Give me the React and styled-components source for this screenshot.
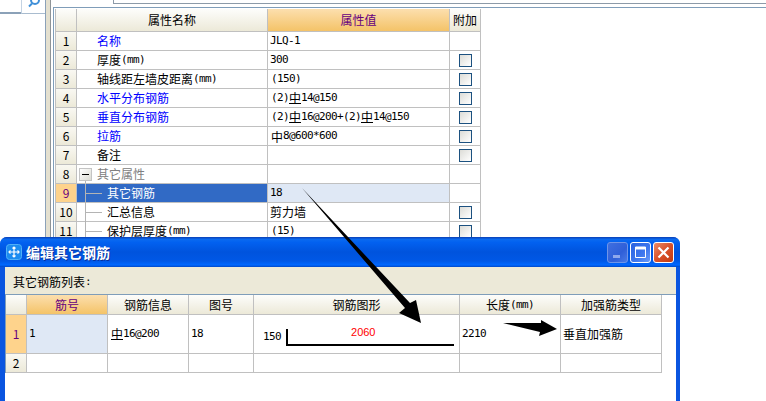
import React from 'react'
import styled, { createGlobalStyle } from 'styled-components'

const GlobalStyle = createGlobalStyle`
    html, body {
        margin: 0;
        padding: 0;
        background: #fff;
    }
`;

const Page = styled.div`
    position: relative;
    display: flex;
    width: 766px;
    height: 401px;
    overflow: hidden;
    background: #fff;
    color: #000;
    font-family: "Noto Sans CJK SC", "Liberation Sans", sans-serif;
    font-size: 12px;
    line-height: 14px;
`;

const SidePanel = styled.div`
    width: 45px;
    flex: none;
    border-right: 1px solid #8ba1b8;
`;

const SideTabs = styled.div`
    display: flex;
    height: 14px;
`;

const TabBlank = styled.div`
    width: 21px;
    height: 12px;
    border-bottom: 2px solid #8ba1b8;
`;

const SearchTab = styled.div`
    flex: 1;
    height: 14px;
    box-sizing: border-box;
    border-left: 1px solid #c4d3e3;
    border-bottom: 1px solid #a9bccf;
    overflow: hidden;
`;

const Splitter = styled.div`
    width: 4px;
    flex: none;
    background: #e4e0cf;
    border-right: 1px solid #8e9498;
    margin-right: 2px;
`;

const MainPanel = styled.div`
    flex: 1;
    min-width: 0;
`;

const TopTabs = styled.div`
    height: 3px;
    margin-left: 60px;
    border-left: 1px solid #8c9aa8;
    border-bottom: 1px solid #8c9aa8;
`;

const Frame = styled.div`
    margin-top: 3px;
    padding: 1px 0 0 1px;
    height: 400px;
    border-top: 1px solid #7f9db9;
    border-left: 1px solid #7f9db9;
`;

const Grid = styled.div`
    display: grid;
    grid-template-columns: ${p => p.$cols};
    grid-auto-rows: ${p => p.$rowHeight || '19px'};
    width: max-content;
    border-left: 1px solid #c0c0c0;
`;

const Cell = styled.div`
    display: flex;
    align-items: center;
    position: relative;
    box-sizing: border-box;
    border-right: 1px solid #c0c0c0;
    border-bottom: 1px solid #c0c0c0;
    padding-left: ${p => p.$pad ?? 2}px;
    white-space: nowrap;
    background: ${p => p.$bg || '#fff'};
`;

const HeadCell = styled.div`
    display: flex;
    align-items: center;
    justify-content: center;
    box-sizing: border-box;
    height: ${p => p.$height}px;
    border-right: 1px solid #c0c0c0;
    border-bottom: 1px solid #c0c0c0;
    white-space: nowrap;
    color: ${p => (p.$active ? '#66007f' : '#000')};
    background: ${p => p.$active
        ? 'linear-gradient(#fcdfae, #f4c368)'
        : 'linear-gradient(#fdfdfb, #ece9d8)'};
`;

const NumCell = styled.div`
    display: flex;
    align-items: center;
    justify-content: center;
    box-sizing: border-box;
    height: ${p => p.$height || 19}px;
    border-right: 1px solid #c0c0c0;
    border-bottom: 1px solid #c0c0c0;
    color: ${p => (p.$active ? '#66007f' : '#000')};
    background: ${p => p.$active ? '#fed38c' : 'linear-gradient(#f9f8f2, #ece9d8)'};
`;

const NameCell = styled(Cell)`
    padding-left: ${p => (p.$tree ? 30 : 20)}px;
    color: ${p => p.$color || '#000'};
    background: ${p => (p.$selected ? '#316ac5' : '#fff')};

    ${p => p.$tree && `
        &::before {
            content: "";
            position: absolute;
            left: 8px;
            top: 0;
            bottom: -1px;
            width: 1px;
            background: #b4b4b4;
        }
        &::after {
            content: "";
            position: absolute;
            left: 8px;
            top: 9px;
            width: 17px;
            height: 1px;
            background: #b4b4b4;
        }
    `}
`;

const GroupCell = styled(Cell)`
    padding-left: 2px;
    gap: 5px;
    color: #808080;
`;

const ExpandBox = styled.span`
    position: relative;
    width: 13px;
    height: 13px;
    box-sizing: border-box;
    border: 1px solid #c4c4c4;
    background: linear-gradient(135deg, #fff, #dcdcd4);

    &::before {
        content: "";
        position: absolute;
        left: 2px;
        top: 5px;
        width: 7px;
        height: 1px;
        background: #000;
    }
    &::after {
        content: "";
        position: absolute;
        left: 5px;
        top: 12px;
        width: 1px;
        height: 2px;
        background: #b4b4b4;
    }
`;

const CheckCell = styled(Cell)`
    justify-content: center;
    padding-left: 0;
`;

const CheckBox = styled.span`
    width: 13px;
    height: 13px;
    box-sizing: border-box;
    border: 1px solid #1c5180;
    background: linear-gradient(135deg, #dcdcd7, #fff);
`;

const Lat = styled.span`
    font-family: "DejaVu Sans Mono", monospace;
    font-size: 11px;
    letter-spacing: -0.62px;
`;

const RebarMark = styled.span`
    display: inline-block;
    line-height: 11px;
    border-bottom: ${p => (p.$plain ? 'none' : '1px solid #000')};
`;

const Dialog = styled.div`
    position: absolute;
    left: 0;
    top: 237px;
    width: 680px;
    height: 190px;
    box-sizing: border-box;
    border-radius: 7px 7px 0 0;
    overflow: hidden;
    background: #0a55e0;
`;

const TitleBar = styled.div`
    display: flex;
    align-items: center;
    height: 30px;
    box-sizing: border-box;
    padding: 2px 6px 2px 6px;
    background: linear-gradient(#0a3fb5 0, #0a6af0 8%, #0261f0 18%, #0053dd 50%, #0058e6 80%, #0068ff 93%, #0048c8 100%);
`;

const TitleIcon = styled.svg`
    width: 16px;
    height: 16px;
    flex: none;
`;

const TitleText = styled.div`
    flex: 1;
    margin-left: 4px;
    color: #fff;
    font-size: 14px;
    font-weight: 700;
    text-shadow: 1px 1px 0 #0a2f9c;
`;

const TitleButtons = styled.div`
    display: flex;
    gap: 2px;
`;

const WinButton = styled.div`
    display: flex;
    align-items: center;
    justify-content: center;
    width: 21px;
    height: 21px;
    box-sizing: border-box;
    border-radius: 3px;
    border: 1px solid ${p => (p.$disabled ? '#6f95e8' : '#fff')};
    background: ${p => p.$bg};
`;

const DialogBody = styled.div`
    margin: 0 4px 0 5px;
    height: 160px;
    background: #fff;
`;

const ListBar = styled.div`
    display: flex;
    align-items: center;
    height: 28px;
    box-sizing: border-box;
    padding: 2px 0 0 8px;
    background: #ece9d8;
    border-bottom: 1px solid #7f9db9;
`;

const DialogGrid = styled(Grid)`
    border-left: 1px solid #7f9db9;
    grid-auto-rows: auto;
`;

const TallCell = styled(Cell)`
    height: ${p => p.$height}px;
`;

const BarLabel = styled(Lat)`
    margin-top: 6px;
`;

const BarShape = styled.div`
    position: relative;
    width: 168px;
    height: 17px;
    margin: 6px 0 0 5px;
    box-sizing: border-box;
    border-left: 2px solid #000;
    border-bottom: 2px solid #000;
`;

const BarLength = styled.span`
    position: absolute;
    left: 63px;
    top: -4px;
    color: #f00;
    font-family: "Liberation Sans", sans-serif;
    font-size: 11px;
`;

const ArrowLayer = styled.svg`
    position: absolute;
    left: 0;
    top: 0;
    width: 766px;
    height: 401px;
    pointer-events: none;
`;

const Rebar = ({ plain }) => <RebarMark $plain={plain}>中</RebarMark>

const rows = [
    { name: '名称', value: <Lat>JLQ-1</Lat>, color: '#0000ff' },
    { name: '厚度', unit: true, value: <Lat>300</Lat>, check: true },
    { name: '轴线距左墙皮距离', unit: true, pad: 3, value: <Lat>(150)</Lat>, check: true },
    { name: '水平分布钢筋', color: '#0000ff', pad: 3, check: true, value: <><Lat>(2)</Lat><Rebar /><Lat>14@150</Lat></> },
    { name: '垂直分布钢筋', color: '#0000ff', pad: 3, check: true, value: <><Lat>(2)</Lat><Rebar /><Lat>16@200+(2)</Lat><Rebar /><Lat>14@150</Lat></> },
    { name: '拉筋', color: '#0000ff', pad: 3, check: true, value: <><Rebar plain /><Lat>8@600*600</Lat></> },
    { name: '备注', check: true },
    { name: '其它属性', group: true },
    { name: '其它钢筋', tree: true, selected: true, value: <Lat>18</Lat> },
    { name: '汇总信息', tree: true, value: '剪力墙', check: true },
    { name: '保护层厚度', unit: true, tree: true, pad: 3, value: <Lat>(15)</Lat>, check: true },
]

function PropertyTable() {
    return (
        <Grid $cols="21px 191px 182px 31px" $rowHeight="auto">
            <HeadCell $height={23} />
            <HeadCell $height={23}>属性名称</HeadCell>
            <HeadCell $height={23} $active>属性值</HeadCell>
            <HeadCell $height={23}>附加</HeadCell>
            {rows.map((row, i) => (
                <React.Fragment key={row.name}>
                    <NumCell $active={row.selected}>{i + 1}</NumCell>
                    {row.group ? (
                        <GroupCell><ExpandBox />{row.name}</GroupCell>
                    ) : (
                        <NameCell
                            $tree={row.tree}
                            $selected={row.selected}
                            $color={row.selected ? '#fff' : row.color}
                        >
                            {row.name}{row.unit && <Lat>(mm)</Lat>}
                        </NameCell>
                    )}
                    <Cell $pad={row.pad} $bg={row.selected ? '#dfe8f5' : undefined}>{row.value}</Cell>
                    <CheckCell>{row.check && <CheckBox />}</CheckCell>
                </React.Fragment>
            ))}
        </Grid>
    );
}

function SteelDialog() {
    return (
        <Dialog>
            <TitleBar>
                <TitleIcon viewBox="0 0 16 16">
                    <rect x="0.5" y="0.5" width="15" height="15" rx="3" fill="#1c8cf0" stroke="#4fb0f8" />
                    <path d="M8 3v10M3 8h10M6.5 4.5L8 3l1.5 1.5M6.5 11.5L8 13l1.5-1.5" fill="none" stroke="#fff" strokeWidth="1.2" />
                    <path d="M4.5 6.5L3 8l1.5 1.5M11.5 6.5L13 8l-1.5 1.5" fill="none" stroke="#fff" strokeWidth="1.2" />
                </TitleIcon>
                <TitleText>编辑其它钢筋</TitleText>
                <TitleButtons>
                    <WinButton $disabled $bg="linear-gradient(135deg, #3f6fe0, #2f5fd8 60%, #4a7ae6)">
                        <svg width="13" height="13" viewBox="0 0 13 13"><rect x="2" y="9" width="7" height="3" fill="#8fa8ec" /></svg>
                    </WinButton>
                    <WinButton $bg="linear-gradient(135deg, #2a62e0, #3f78ee 60%, #6a9bf8)">
                        <svg width="13" height="13" viewBox="0 0 13 13"><path d="M1.5 1h10v10.5h-10z" fill="none" stroke="#fff" /><rect x="1" y="1" width="11" height="2.5" fill="#fff" /></svg>
                    </WinButton>
                    <WinButton $bg="linear-gradient(135deg, #e88a68, #d9512a 50%, #c23a10)">
                        <svg width="13" height="13" viewBox="0 0 13 13"><path d="M1.5 1.5l10 10M11.5 1.5l-10 10" stroke="#fff" strokeWidth="2.2" /></svg>
                    </WinButton>
                </TitleButtons>
            </TitleBar>
            <DialogBody>
                <ListBar>其它钢筋列表<Lat>:</Lat></ListBar>
                <DialogGrid $cols="21px 81px 81px 65px 206px 101px 101px">
                    <HeadCell $height={20} />
                    <HeadCell $height={20} $active>筋号</HeadCell>
                    <HeadCell $height={20}>钢筋信息</HeadCell>
                    <HeadCell $height={20}>图号</HeadCell>
                    <HeadCell $height={20}>钢筋图形</HeadCell>
                    <HeadCell $height={20}>长度<Lat>(mm)</Lat></HeadCell>
                    <HeadCell $height={20}>加强筋类型</HeadCell>

                    <NumCell $active $height={39}>1</NumCell>
                    <TallCell $height={39} $bg="#dfe8f5"><Lat>1</Lat></TallCell>
                    <TallCell $height={39} $pad={3}><Rebar /><Lat>16@200</Lat></TallCell>
                    <TallCell $height={39}><Lat>18</Lat></TallCell>
                    <TallCell $height={39} $pad={9}>
                        <BarLabel>150</BarLabel>
                        <BarShape><BarLength>2060</BarLength></BarShape>
                    </TallCell>
                    <TallCell $height={39}><Lat>2210</Lat></TallCell>
                    <TallCell $height={39}>垂直加强筋</TallCell>

                    <NumCell>2</NumCell>
                    <TallCell $height={19} />
                    <TallCell $height={19} />
                    <TallCell $height={19} />
                    <TallCell $height={19} />
                    <TallCell $height={19} />
                    <TallCell $height={19} />
                </DialogGrid>
            </DialogBody>
        </Dialog>
    );
}

function App() {
    return (
        <Page>
            <GlobalStyle />
            <SidePanel>
                <SideTabs>
                    <TabBlank />
                    <SearchTab>
                        <svg width="24" height="13" viewBox="0 0 24 13">
                            <circle cx="13" cy="0" r="4" fill="none" stroke="#3f8fd8" strokeWidth="2" />
                            <path d="M10 3.5L7 6.5" stroke="#3f8fd8" strokeWidth="2" />
                        </svg>
                    </SearchTab>
                </SideTabs>
            </SidePanel>
            <Splitter />
            <MainPanel>
                <TopTabs />
                <Frame>
                    <PropertyTable />
                </Frame>
            </MainPanel>
            <SteelDialog />
            <ArrowLayer viewBox="0 0 766 401">
                <polygon points="302,188 410,303 416,300 421,323 399,313 405,308" fill="#000" />
                <polygon points="503,323 541,323 541,320 557,329 539,336 540,332" fill="#000" />
            </ArrowLayer>
        </Page>
    );
}

export default App;
